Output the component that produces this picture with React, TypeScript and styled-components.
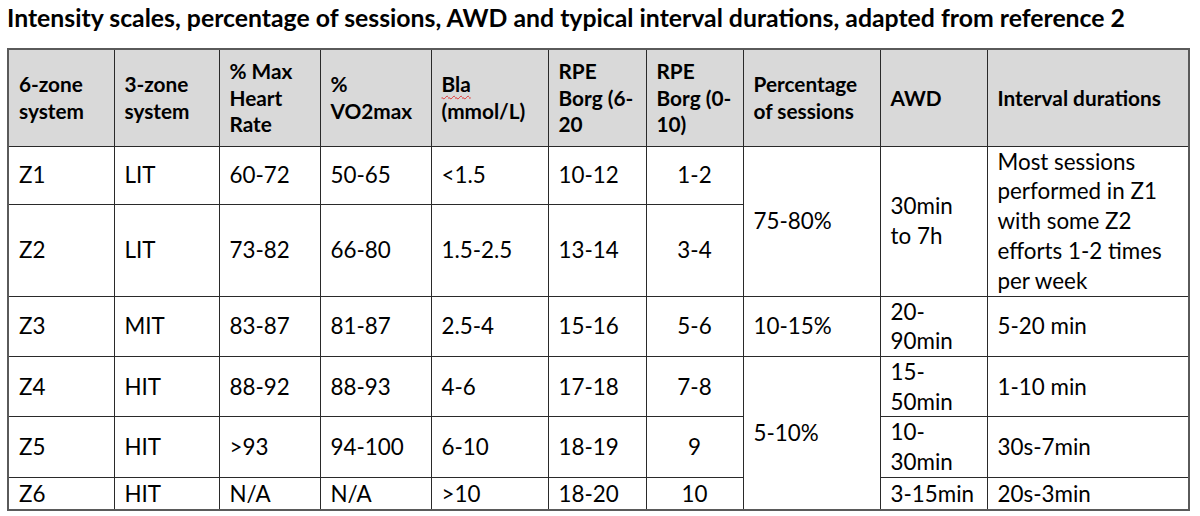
import React from 'react';
import styled, { createGlobalStyle } from 'styled-components';

const GlobalStyle = createGlobalStyle`
  html, body {
    margin: 0;
    padding: 0;
    background: #fff;
  }
  body {
    font-family: Lato, "Open Sans", "Liberation Sans", sans-serif;
    color: #000;
  }
`;

const Page = styled.div`
  width: 1200px;
  height: 516px;
  padding: 4px 0 0 7px;
  box-sizing: border-box;
  overflow: hidden;
`;

const Title = styled.h1`
  margin: 0;
  font-size: 24.8px;
  line-height: 28px;
  font-weight: 700;
  white-space: nowrap;
`;

const Table = styled.table`
  margin-top: 16px;
  border-collapse: collapse;
  table-layout: fixed;
  width: 1181px;
  border: 2px solid #5a5a5a;
`;

const HeadRow = styled.tr`
  height: 97px;
  background: #d9d9d9;
`;

const Row = styled.tr<{ $h: number }>`
  height: ${(p) => p.$h}px;
`;

const Th = styled.th`
  border: 1px solid #2a2a2a;
  padding: 0 10px;
  text-align: left;
  vertical-align: middle;
  font-size: 20.8px;
  line-height: 26.5px;
  font-weight: 700;
  white-space: nowrap;
`;

const Td = styled.td<{ $center?: boolean }>`
  border: 1px solid #2a2a2a;
  padding: 0 10px;
  text-align: ${(p) => (p.$center ? 'center' : 'left')};
  vertical-align: middle;
  font-size: 22.4px;
  line-height: 29.7px;
  white-space: nowrap;
`;

const Squiggle = styled.span`
  text-decoration: underline wavy #e03030;
  text-decoration-thickness: 1px;
  text-underline-offset: 3px;
`;

const widths = [106, 105, 101, 111, 117, 98, 97, 137, 107, 202];

const lines = (parts: string[]) =>
  parts.map((p, i) => (
    <React.Fragment key={i}>
      {i > 0 && <br />}
      {p}
    </React.Fragment>
  ));

export default function App() {
  return (
    <Page>
      <GlobalStyle />
      <Title>
        Intensity scales, percentage of sessions, AWD and typical interval durations, adapted from reference 2
      </Title>
      <Table>
        <colgroup>
          {widths.map((w, i) => (
            <col key={i} style={{ width: w }} />
          ))}
        </colgroup>
        <thead>
          <HeadRow>
            <Th>{lines(['6-zone', 'system'])}</Th>
            <Th>{lines(['3-zone', 'system'])}</Th>
            <Th>{lines(['% Max', 'Heart', 'Rate'])}</Th>
            <Th>{lines(['%', 'VO2max'])}</Th>
            <Th>
              <Squiggle>Bla</Squiggle>
              <br />
              (mmol/L)
            </Th>
            <Th>{lines(['RPE', 'Borg (6-', '20'])}</Th>
            <Th>{lines(['RPE', 'Borg (0-', '10)'])}</Th>
            <Th>{lines(['Percentage', 'of sessions'])}</Th>
            <Th>AWD</Th>
            <Th>Interval durations</Th>
          </HeadRow>
        </thead>
        <tbody>
          <Row $h={58}>
            <Td>Z1</Td>
            <Td>LIT</Td>
            <Td>60-72</Td>
            <Td>50-65</Td>
            <Td>&lt;1.5</Td>
            <Td>10-12</Td>
            <Td $center>1-2</Td>
            <Td rowSpan={2}>75-80%</Td>
            <Td rowSpan={2}>{lines(['30min', 'to 7h'])}</Td>
            <Td rowSpan={2}>
              {lines(['Most sessions', 'performed in Z1', 'with some Z2', 'efforts 1-2 times', 'per week'])}
            </Td>
          </Row>
          <Row $h={92}>
            <Td>Z2</Td>
            <Td>LIT</Td>
            <Td>73-82</Td>
            <Td>66-80</Td>
            <Td>1.5-2.5</Td>
            <Td>13-14</Td>
            <Td $center>3-4</Td>
          </Row>
          <Row $h={60}>
            <Td>Z3</Td>
            <Td>MIT</Td>
            <Td>83-87</Td>
            <Td>81-87</Td>
            <Td>2.5-4</Td>
            <Td>15-16</Td>
            <Td $center>5-6</Td>
            <Td>10-15%</Td>
            <Td>{lines(['20-', '90min'])}</Td>
            <Td>5-20 min</Td>
          </Row>
          <Row $h={59}>
            <Td>Z4</Td>
            <Td>HIT</Td>
            <Td>88-92</Td>
            <Td>88-93</Td>
            <Td>4-6</Td>
            <Td>17-18</Td>
            <Td $center>7-8</Td>
            <Td rowSpan={3}>5-10%</Td>
            <Td>{lines(['15-', '50min'])}</Td>
            <Td>1-10 min</Td>
          </Row>
          <Row $h={59}>
            <Td>Z5</Td>
            <Td>HIT</Td>
            <Td>&gt;93</Td>
            <Td>94-100</Td>
            <Td>6-10</Td>
            <Td>18-19</Td>
            <Td $center>9</Td>
            <Td>{lines(['10-', '30min'])}</Td>
            <Td>30s-7min</Td>
          </Row>
          <Row $h={33}>
            <Td>Z6</Td>
            <Td>HIT</Td>
            <Td>N/A</Td>
            <Td>N/A</Td>
            <Td>&gt;10</Td>
            <Td>18-20</Td>
            <Td $center>10</Td>
            <Td>3-15min</Td>
            <Td>20s-3min</Td>
          </Row>
        </tbody>
      </Table>
    </Page>
  );
}
